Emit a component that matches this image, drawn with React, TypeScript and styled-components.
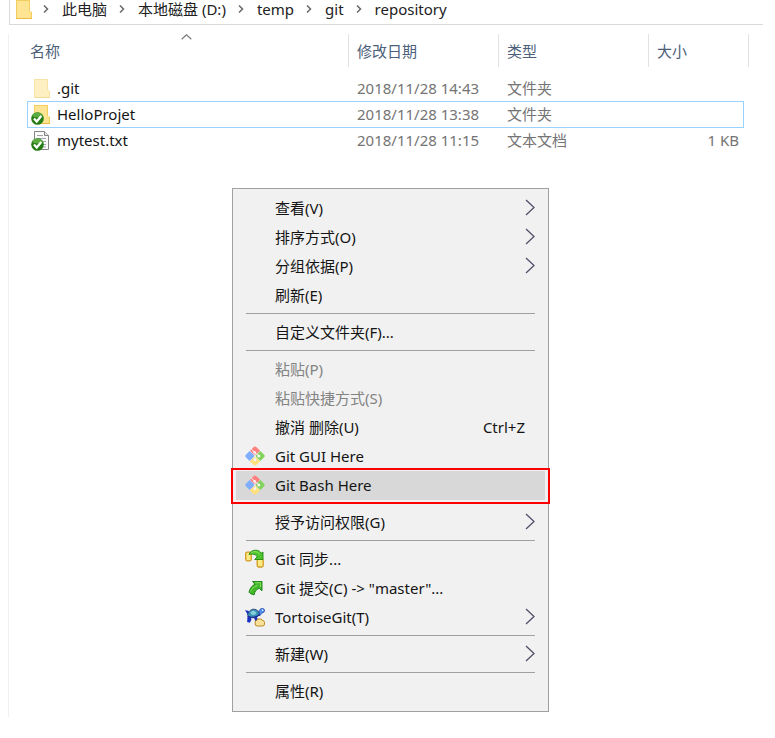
import React from "react";
import styled, { createGlobalStyle, css } from "styled-components";

const GlobalStyle = createGlobalStyle`
  * { box-sizing: border-box; }
  body {
    margin: 0;
    background: #ffffff;
    color: #141414;
    font-family: "Noto Sans", "Noto Sans CJK SC", sans-serif;
    font-size: 15px;
    line-height: 20px;
  }
`;

const Page = styled.main`
  padding: 0 12px 20px 8px;
`;

const AddressBar = styled.nav`
  display: flex;
  align-items: center;
  height: 25px;
  margin-left: 1px;
  padding: 0 0 6px 5px;
  border: 1px solid #d9d9d9;
  border-top: 0;
  border-right: 0;
`;

const CrumbList = styled.ol`
  display: flex;
  margin: 0 0 0 -5px;
  padding: 0;
  list-style: none;
`;

const Crumb = styled.li`
  display: flex;
  align-items: center;
`;

const CrumbLink = styled.a`
  color: #222222;
  text-decoration: none;
  white-space: nowrap;
`;

const CrumbArrow = styled.svg`
  width: 6px;
  height: 8px;
  margin: 0 13px 0 12px;
`;

const Pane = styled.section`
  margin-top: 9px;
  padding-right: 14px;
  padding-bottom: 5px;
  border-left: 1px solid #f0f0f0;
`;

const FileTable = styled.table`
  width: 100%;
  table-layout: fixed;
  border-collapse: separate;
  border-spacing: 0;
  color: #747474;
`;

const HeadCell = styled.th<{ $width?: number; $first?: boolean }>`
  position: relative;
  width: ${(p) => (p.$width ? `${p.$width}px` : "auto")};
  height: 33px;
  padding: 0 0 0 ${(p) => (p.$first ? 21 : 8)}px;
  border-right: 1px solid #e2e2e2;
  color: #4c607a;
  font-weight: 400;
  text-align: left;
`;

const SortMark = styled.svg`
  position: absolute;
  top: 0;
  left: 172px;
  width: 11px;
  height: 6px;
`;

const Gap = styled.tbody`
  td { height: 8px; padding: 0; }
`;

const FileRow = styled.tr`
  position: relative;
`;

const Cell = styled.td<{ $right?: boolean }>`
  height: 26px;
  padding: 0 ${(p) => (p.$right ? 10 : 0)}px 0 8px;
  text-align: ${(p) => (p.$right ? "right" : "left")};
  white-space: nowrap;
`;

const NameCell = styled(Cell)<{ $focused?: boolean }>`
  padding-left: 22px;
  color: #141414;

  ${(p) =>
    p.$focused &&
    css`
      &::after {
        content: "";
        position: absolute;
        inset: 0 5px -1px 18px;
        border: 1px solid #99d1ff;
        pointer-events: none;
      }
    `}
`;

const FileName = styled.span`
  display: flex;
  align-items: center;
  gap: 5px;
`;

const FileIcon = styled.svg`
  flex: none;
  width: 21px;
  height: 21px;
`;

const Menu = styled.div`
  width: 317px;
  margin: 35px 0 0 223px;
  padding: 5px 3px;
  border: 1px solid #a0a0a0;
  background: #f1f1f1;
`;

const MenuButton = styled.button<{ $active?: boolean }>`
  position: relative;
  display: grid;
  grid-template-columns: 20px 1fr auto;
  column-gap: 10px;
  align-items: center;
  width: 100%;
  height: 29px;
  padding: 0 9px 2px;
  border: 0;
  background: ${(p) => (p.$active ? "#d8d8d8" : "transparent")};
  color: #141414;
  font: inherit;
  text-align: left;

  &:disabled { color: #838383; }

  ${(p) =>
    p.$active &&
    css`
      &::after {
        content: "";
        position: absolute;
        inset: -3px -5px -4px;
        border: 2px solid #fc0000;
      }
    `}
`;

const Label = styled.span`
  grid-column: 2;
  white-space: nowrap;
`;

const Shortcut = styled.span`
  padding-right: 11px;
`;

const Separator = styled.hr`
  height: 1px;
  margin: 3px 10px 4px;
  border: 0;
  background: #a0a0a0;
`;

const MenuIcon = styled.svg`
  width: 20px;
  height: 20px;
`;

const MenuArrow = styled.svg`
  width: 11px;
  height: 17px;
`;

function Folder() {
  return (
    <>
      <path d="M3 1h14v11l2 1v7H3z" fill="#f3cd5e" />
      <path d="M4 2h12v17H4z" fill="#ffe494" />
      <path d="M16 12h2v7h-2z" fill="#ffe18a" />
      <path d="M3 19h16v1H3z" fill="#e9bd45" />
    </>
  );
}

function Check() {
  return (
    <>
      <circle cx="6.5" cy="14.5" r="6.3" fill="#257c12" />
      <path d="M1 12a6 6 0 0 1 11 0q-5 3-11 0z" fill="#5bab42" />
      <path d="M3 14.5l2.7 3 4.6-5.6" fill="none" stroke="#fff" strokeWidth="2.3" />
    </>
  );
}

function EntryIcon({ kind }: { kind: string }) {
  return (
    <FileIcon viewBox="0 0 21 21" aria-hidden="true">
      {kind === "hidden" && <g opacity="0.55"><Folder /></g>}
      {kind === "folder" && <><Folder /><Check /></>}
      {kind === "text" && (
        <>
          <path d="M3.5 1.5h10l4 4v14h-14z" fill="#fafafa" stroke="#858585" />
          <path d="M13.5 1.5v4h4" fill="#e4e4e4" stroke="#858585" />
          <path d="M6 5.5h6M6 8.5h9M6 11.5h9M6 14.5h9M6 17h9" stroke="#a0a5aa" />
          <Check />
        </>
      )}
    </FileIcon>
  );
}

function GitIcon() {
  return (
    <MenuIcon viewBox="0 0 20 20" aria-hidden="true">
      <path d="M8.2 1.4Q10-.6 11.8 1.4l3.3 3.3L10 9.8 5 4.7z" fill="#ff8080" />
      <path d="M15.3 4.9l3.6 3.6q1.6 1.5 0 3l-3.6 3.6-5.1-5.1z" fill="#82d35b" />
      <path d="M4.7 4.9l5.1 5.1-5.1 5.1-3.6-3.6q-1.6-1.5 0-3z" fill="#80aeff" />
      <path d="M10 10.2l5.1 5.1-3.3 3.3q-1.8 2-3.6 0L4.9 15.3z" fill="#ffe07a" />
      <path d="M6.2 3L10 6.5v7M10 6.5l3.8 3.5" fill="none" stroke="#f4f4f4" strokeWidth="1" />
      <circle cx="9.6" cy="6.3" r="1.3" fill="#f4f4f4" />
      <circle cx="13.8" cy="10" r="1.5" fill="#f4f4f4" />
      <circle cx="10" cy="13.7" r="1.5" fill="#f4f4f4" />
    </MenuIcon>
  );
}

function SyncIcon() {
  return (
    <MenuIcon viewBox="0 0 20 20" aria-hidden="true">
      <rect x="0.7" y="3.2" width="5.6" height="8.6" rx="1.5" fill="#fbe984" stroke="#d09a22" strokeWidth="1.3" />
      <rect x="12.2" y="9.7" width="6" height="8.3" rx="1.5" fill="#fbe984" stroke="#d09a22" strokeWidth="1.3" />
      <path d="M4 5.5C5 2.5 8 1 11 1.2c2.6 .1 4.4 1.3 5 3.2L18 3v7.5H9.7l2.4-2.6C11.2 5 7.5 4.7 4 5.5z" fill="#4ec42c" stroke="#208a13" strokeWidth="0.9" />
      <path d="M6.2 3.9c3-2 7-1.6 8.4 1.6" fill="none" stroke="#93e76d" />
    </MenuIcon>
  );
}

function CommitIcon() {
  return (
    <MenuIcon viewBox="0 0 20 20" aria-hidden="true">
      <path d="M7.5 3.5H17v9.3l-2.8-2.5c-3.2 1.3-4.6 3.3-5 6.5-2-.2-4-1-5.2-2.6.8-4 3-6.6 6-7.9z" fill="#41b928" stroke="#177c12" strokeWidth="0.9" />
      <path d="M10.2 4.7h5.4V9M12.6 7.3C9 8.5 6.7 10.6 5.6 13.4" fill="none" stroke="#8bdc6a" />
    </MenuIcon>
  );
}

function TortoiseIcon() {
  return (
    <MenuIcon viewBox="0 0 20 20" aria-hidden="true">
      <path d="M0 3.2l3.5.5 1 2.5-1.5 1.8zM2.5 9.5l3.2.5.8 2.5-1.6 3.2-2.8-.8zM9 10.5l3-.5.8 3-2.2 2z" fill="#1c2fc4" />
      <path d="M13.5 6c.5-3.5 2.3-5 4.6-4.5 2.4 1 1.9 3.9-.6 4.3-1 .5-1.7 1.8-3 3.2z" fill="#4b8cf0" stroke="#1a349c" strokeWidth="0.7" />
      <path d="M2.5 8C3.8 3.8 6.5 2 9 2.2c3 .2 4.8 2.1 5.3 5.1-1 3.7-9 5.2-11.8.7z" fill="#3d93b5" stroke="#17306e" strokeWidth="0.8" />
      <path d="M5.4 5.2l3-1.6 3 1.8-1.3 2.4H6.5z" fill="#86d0dc" />
      <path d="M2.5 9.2q6 2.7 12-1.5" fill="none" stroke="#1d2a9c" strokeWidth="1.2" />
      <circle cx="17.6" cy="3.2" r="0.8" fill="#fff" />
      <path d="M12.8 12h3.5l1 1.4q2.2 0 2.2 2v1.6q0 2-2 2h-5.3q-2 0-2-2V15q0-1.6 1.6-1.6z" fill="#fae29a" stroke="#b98925" />
    </MenuIcon>
  );
}

const icons: Record<string, () => React.JSX.Element> = {
  git: GitIcon,
  sync: SyncIcon,
  commit: CommitIcon,
  tortoise: TortoiseIcon,
};

type Item = {
  label: string;
  icon?: string;
  sub?: boolean;
  disabled?: boolean;
  active?: boolean;
  shortcut?: string;
};

const groups: Item[][] = [
  [
    { label: "查看(V)", sub: true },
    { label: "排序方式(O)", sub: true },
    { label: "分组依据(P)", sub: true },
    { label: "刷新(E)" },
  ],
  [{ label: "自定义文件夹(F)..." }],
  [
    { label: "粘贴(P)", disabled: true },
    { label: "粘贴快捷方式(S)", disabled: true },
    { label: "撤消 删除(U)", shortcut: "Ctrl+Z" },
    { label: "Git GUI Here", icon: "git" },
    { label: "Git Bash Here", icon: "git", active: true },
  ],
  [{ label: "授予访问权限(G)", sub: true }],
  [
    { label: "Git 同步...", icon: "sync" },
    { label: "Git 提交(C) -> \"master\"...", icon: "commit" },
    { label: "TortoiseGit(T)", icon: "tortoise", sub: true },
  ],
  [{ label: "新建(W)", sub: true }],
  [{ label: "属性(R)" }],
];

const files = [
  { name: ".git", kind: "hidden", date: "2018/11/28 14:43", type: "文件夹", size: "" },
  { name: "HelloProjet", kind: "folder", date: "2018/11/28 13:38", type: "文件夹", size: "", focused: true },
  { name: "mytest.txt", kind: "text", date: "2018/11/28 11:15", type: "文本文档", size: "1 KB" },
];

const crumbs = ["此电脑", "本地磁盘 (D:)", "temp", "git", "repository"];

function MenuRow({ item }: { item: Item }) {
  const Icon = item.icon ? icons[item.icon] : null;
  return (
    <MenuButton type="button" role="menuitem" disabled={item.disabled} $active={item.active}>
      {Icon && <Icon />}
      <Label>{item.label}</Label>
      {item.shortcut && <Shortcut>{item.shortcut}</Shortcut>}
      {item.sub && (
        <MenuArrow viewBox="0 0 11 17" aria-hidden="true">
          <path d="M1 1l8 7.5L1 16" fill="none" stroke="#51506a" strokeWidth="1.3" />
        </MenuArrow>
      )}
    </MenuButton>
  );
}

export default function App() {
  return (
    <Page>
      <GlobalStyle />
      <AddressBar aria-label="路径">
        <FileIcon viewBox="2 0 21 21" aria-hidden="true"><Folder /></FileIcon>
        <CrumbList>
          {crumbs.map((name) => (
            <Crumb key={name}>
              <CrumbArrow viewBox="0 0 6 8" aria-hidden="true">
                <path d="M1 0.5L4.5 4 1 7.5" fill="none" stroke="#686868" strokeWidth="1.5" />
              </CrumbArrow>
              <CrumbLink href="#">{name}</CrumbLink>
            </Crumb>
          ))}
        </CrumbList>
      </AddressBar>
      <Pane>
        <FileTable>
          <thead>
            <tr>
              <HeadCell $first scope="col">
                名称
                <SortMark viewBox="0 0 11 6" aria-hidden="true">
                  <path d="M0.7 5.3l4.8-4.5 4.8 4.5" fill="none" stroke="#7a7a7a" strokeWidth="1.2" />
                </SortMark>
              </HeadCell>
              <HeadCell $width={150} scope="col">修改日期</HeadCell>
              <HeadCell $width={150} scope="col">类型</HeadCell>
              <HeadCell $width={100} scope="col">大小</HeadCell>
            </tr>
          </thead>
          <Gap><tr><td colSpan={4} /></tr></Gap>
          <tbody>
            {files.map((file) => (
              <FileRow key={file.name}>
                <NameCell $focused={file.focused}>
                  <FileName><EntryIcon kind={file.kind} />{file.name}</FileName>
                </NameCell>
                <Cell>{file.date}</Cell>
                <Cell>{file.type}</Cell>
                <Cell $right>{file.size}</Cell>
              </FileRow>
            ))}
          </tbody>
        </FileTable>
        <Menu role="menu">
          {groups.map((group, index) => (
            <React.Fragment key={group[0].label}>
              {index > 0 && <Separator />}
              {group.map((item) => <MenuRow key={item.label} item={item} />)}
            </React.Fragment>
          ))}
        </Menu>
      </Pane>
    </Page>
  );
}
